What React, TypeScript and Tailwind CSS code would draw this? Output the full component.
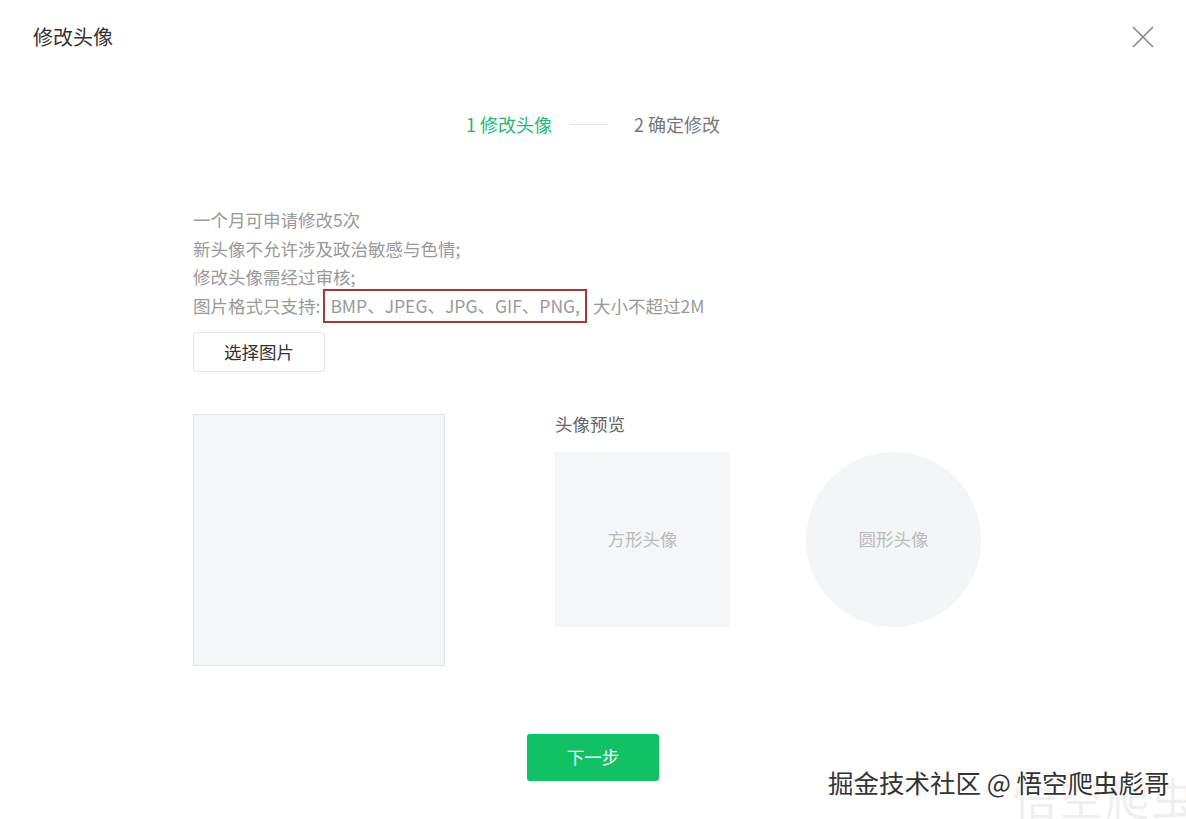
import React from "react";

const font = { fontFamily: '"Noto Sans CJK SC", "Noto Sans", sans-serif' };

export default function App() {
  return (
    <div className="relative w-[1186px] h-[819px] overflow-hidden bg-white" style={font}>
      {/* Header */}
      <div className="flex items-center justify-between pl-[33px] pr-[32px] pt-[23px]">
        <h1 className="text-[20px] leading-[28px] text-[#333]">修改头像</h1>
        <button aria-label="close" className="w-[22px] h-[22px] text-[#888]">
          <svg viewBox="0 0 22 22" className="w-[22px] h-[22px]" fill="none" stroke="currentColor" strokeWidth={1.6}>
            <path d="M1 1L21 21M21 1L1 21" />
          </svg>
        </button>
      </div>

      {/* Steps */}
      <div className="mt-[60px] flex items-center justify-center gap-[18px] text-[18px] leading-[26px]">
        <span className="text-[#1fb873]">1 修改头像</span>
        <span className="w-[38px] h-px bg-[#e3e3e3]" />
        <span className="ml-[8px] text-[#777]">2 确定修改</span>
      </div>

      {/* Body */}
      <div className="ml-[193px] mt-[69px]">
        <div className="text-[17.5px] leading-[28.5px] text-[#999]">
          <p>一个月可申请修改5次</p>
          <p>新头像不允许涉及政治敏感与色情;</p>
          <p>修改头像需经过审核;</p>
          <p className="flex items-center">
            图片格式只支持:
            <span className="ml-[3px] mr-[6px] -my-[3px] border-2 border-[#a83838] px-[5px] leading-[30px]">
              BMP、JPEG、JPG、GIF、PNG,
            </span>
            大小不超过2M
          </p>
        </div>

        <button className="mt-[12px] w-[132px] h-[40px] rounded-[3px] border border-[#e6e6e6] text-[17.5px] text-[#333] bg-white">
          选择图片
        </button>

        <div className="mt-[42px] flex">
          <div className="w-[252px] h-[252px] border border-[#e2e2e2] bg-[#f4f6f8]" />
          <div className="ml-[110px] -mt-[2px]">
            <div className="text-[17.5px] leading-[24px] text-[#666]">头像预览</div>
            <div className="mt-[16px] flex gap-[76px]">
              <div className="w-[175px] h-[175px] bg-[#f4f6f8] flex items-center justify-center text-[17.5px] text-[#bbb]">
                方形头像
              </div>
              <div className="w-[175px] h-[175px] rounded-full bg-[#f3f5f7] flex items-center justify-center text-[17.5px] text-[#bbb]">
                圆形头像
              </div>
            </div>
          </div>
        </div>
      </div>

      {/* Footer */}
      <div className="mt-[68px] flex justify-center">
        <button className="w-[132px] h-[47px] rounded-[3px] bg-[#12c163] text-white text-[17.5px]">下一步</button>
      </div>

      {/* Watermark */}
      <div className="absolute left-[1013px] top-[772px] text-[44px] leading-[50px] text-[#efefef] tracking-[2px] whitespace-nowrap">
        悟空爬虫
      </div>
      <div
        className="absolute left-[828px] top-[766px] text-[25.5px] leading-[32px] text-[#333] whitespace-nowrap"
        style={{ textShadow: "1px 1px 0 #fff, -1px -1px 0 #fff, 1px -1px 0 #fff, -1px 1px 0 #fff" }}
      >
        掘金技术社区 @ 悟空爬虫彪哥
      </div>
    </div>
  );
}
